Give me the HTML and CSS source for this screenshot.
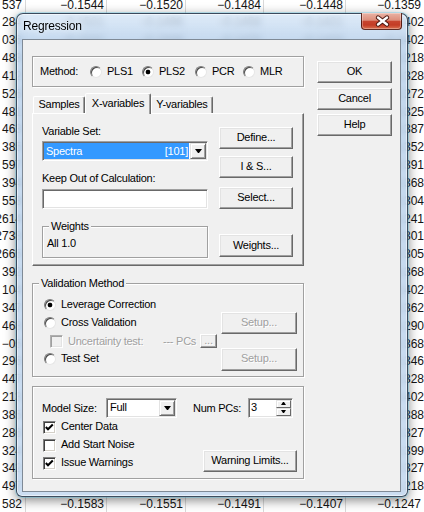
FILE: index.html
```html
<!DOCTYPE html>
<html>
<head>
<meta charset="utf-8">
<link rel="stylesheet" href="styles.css">
</head>
<body>
<div class="sheet">
  <div class="r ed"><span>537</span><span>−0.1544</span><span>−0.1520</span><span>−0.1484</span><span>−0.1448</span><span>−0.1359</span></div>
  <div class="r"><span>284</span><span>−0.1521</span><span>−0.1496</span><span>−0.1458</span><span>−0.1421</span><span>−0.1402</span></div>
  <div class="r"><span>036</span><span>−0.1532</span><span>−0.1508</span><span>−0.1470</span><span>−0.1433</span><span>−0.1402</span></div>
  <div class="r"><span>483</span><span></span><span></span><span></span><span></span><span>−0.1218</span></div>
  <div class="r"><span>412</span><span></span><span></span><span></span><span></span><span>−0.1328</span></div>
  <div class="r"><span>526</span><span></span><span></span><span></span><span></span><span>−0.1272</span></div>
  <div class="r"><span>481</span><span></span><span></span><span></span><span></span><span>−0.1325</span></div>
  <div class="r"><span>463</span><span></span><span></span><span></span><span></span><span>−0.1387</span></div>
  <div class="r"><span>385</span><span></span><span></span><span></span><span></span><span>−0.1352</span></div>
  <div class="r"><span>597</span><span></span><span></span><span></span><span></span><span>−0.1391</span></div>
  <div class="r"><span>394</span><span></span><span></span><span></span><span></span><span>−0.1368</span></div>
  <div class="r"><span>558</span><span></span><span></span><span></span><span></span><span>−0.1304</span></div>
  <div class="r"><span class="rtl">2614</span><span></span><span></span><span></span><span></span><span>−0.1241</span></div>
  <div class="r"><span class="rtl">2738</span><span></span><span></span><span></span><span></span><span>−0.1301</span></div>
  <div class="r"><span class="rtl">2665</span><span></span><span></span><span></span><span></span><span>−0.1305</span></div>
  <div class="r"><span>392</span><span></span><span></span><span></span><span></span><span>−0.1368</span></div>
  <div class="r"><span>104</span><span></span><span></span><span></span><span></span><span>−0.1402</span></div>
  <div class="r"><span>347</span><span></span><span></span><span></span><span></span><span>−0.1362</span></div>
  <div class="r"><span>468</span><span></span><span></span><span></span><span></span><span>−0.1290</span></div>
  <div class="r"><span>−05</span><span></span><span></span><span></span><span></span><span>−0.1368</span></div>
  <div class="r"><span>296</span><span></span><span></span><span></span><span></span><span>−0.1346</span></div>
  <div class="r"><span>447</span><span></span><span></span><span></span><span></span><span>−0.1328</span></div>
  <div class="r"><span>213</span><span></span><span></span><span></span><span></span><span>−0.1402</span></div>
  <div class="r"><span>385</span><span></span><span></span><span></span><span></span><span>−0.1388</span></div>
  <div class="r"><span>286</span><span></span><span></span><span></span><span></span><span>−0.1327</span></div>
  <div class="r"><span>324</span><span></span><span></span><span></span><span></span><span>−0.1399</span></div>
  <div class="r"><span>342</span><span></span><span></span><span></span><span></span><span>−0.1327</span></div>
  <div class="r"><span>497</span><span>−0.1569</span><span>−0.1540</span><span>−0.1484</span><span>−0.1403</span><span>−0.1218</span></div>
  <div class="r ed"><span>582</span><span>−0.1583</span><span>−0.1551</span><span>−0.1491</span><span>−0.1407</span><span>−0.1247</span></div>
</div>

<div class="window">
  <div class="titlebar">
    <span class="title">Regression</span>
    <span class="close">
      <svg width="41" height="16" viewBox="0 0 41 16">
        <path d="M16 4.5 L25 11.5 M25 4.5 L16 11.5" stroke="#4b1810" stroke-width="4.4" stroke-linecap="round" fill="none"/>
        <path d="M16 4.5 L25 11.5 M25 4.5 L16 11.5" stroke="#ffffff" stroke-width="2.4" stroke-linecap="round" fill="none"/>
      </svg>
    </span>
  </div>
  <div class="client">
    <div class="lc">
      <div class="grp method">
        <span class="mlabel">Method:</span>
        <span class="opt w52"><i class="rd"></i>PLS1</span>
        <span class="opt w53"><i class="rd on"></i>PLS2</span>
        <span class="opt w48"><i class="rd"></i>PCR</span>
        <span class="opt"><i class="rd"></i>MLR</span>
      </div>
      <div class="tabs">
        <span class="tab t1">Samples</span>
        <span class="tab t2 on">X-variables</span>
        <span class="tab t3">Y-variables</span>
      </div>
      <div class="panel">
        <div class="pleft">
          <div class="l1">Variable Set:</div>
          <div class="cb big">
            <span class="sel"><span>Spectra</span><span>[101]</span></span>
            <span class="dd"></span>
          </div>
          <div class="l2">Keep Out of Calculation:</div>
          <div class="fld"></div>
          <div class="grp wg">
            <span class="cap">Weights</span>
            <div class="gtext">All 1.0</div>
          </div>
        </div>
        <div class="pright">
          <div class="btn">Define...</div>
          <div class="btn m7">I &amp; S...</div>
          <div class="btn m9">Select...</div>
          <div class="btn m25">Weights...</div>
        </div>
      </div>
      <div class="grp valid">
        <span class="cap">Validation Method</span>
        <div class="vrow first"><i class="rd on"></i>Leverage Correction</div>
        <div class="vrow"><i class="rd"></i>Cross Validation<div class="btn setup dis">Setup...</div></div>
        <div class="vrow u"><i class="ck off"></i><span class="dis ut">Uncertainty test:</span><span class="dis pcs">--- PCs</span><div class="btn mini dis">...</div></div>
        <div class="vrow"><i class="rd"></i>Test Set<div class="btn setup s2 dis">Setup...</div></div>
      </div>
      <div class="grp opts">
        <div class="mrow">
          <span class="msl">Model Size:</span>
          <div class="cb sm"><span class="val">Full</span><span class="dd"></span></div>
          <span class="npc">Num PCs:</span>
          <div class="spin"><span class="val">3</span><span class="sb"><i class="up"></i><i class="dn"></i></span></div>
        </div>
        <div class="crow"><i class="ck"><svg width="11" height="11" viewBox="0 0 11 11"><path d="M1.8 5 L4 7.3 L8.8 2.5" stroke="#000" stroke-width="2" fill="none"/></svg></i>Center Data</div>
        <div class="crow"><i class="ck"></i>Add Start Noise</div>
        <div class="crow"><i class="ck"><svg width="11" height="11" viewBox="0 0 11 11"><path d="M1.8 5 L4 7.3 L8.8 2.5" stroke="#000" stroke-width="2" fill="none"/></svg></i>Issue Warnings<div class="btn wl">Warning Limits...</div></div>
      </div>
    </div>
    <div class="rc">
      <div class="btn">OK</div>
      <div class="btn">Cancel</div>
      <div class="btn">Help</div>
    </div>
  </div>
</div>
</body>
</html>
```

FILE: styles.css
```css
* { box-sizing: border-box; }
html, body { margin: 0; padding: 0; }
body {
  width: 424px; height: 512px; overflow: hidden; position: relative;
  background: #fff; color: #000;
  font-family: "Liberation Sans", Arial, sans-serif;
}

/* spreadsheet behind */
.sheet { margin-top: -3.5px; }
.r {
  display: grid;
  grid-template-columns: 26px 81px 79px 78px 82px 78px;
  height: 17.857px; line-height: 17.857px;
  font-size: 12px; color: #141414;
}
.r span { text-align: right; padding-right: 2px; border-right: 1px solid #d9d9d9; white-space: nowrap; }
.r span:first-child { padding-right: 3px; }
.r span:last-child { border-right: 0; padding-right: 0; }
.r.ed span:last-child { padding-right: 3px; }
.r span.rtl { direction: rtl; }

/* window */
.window {
  position: absolute; left: 16px; top: 13px;
  width: 392px; height: 484px;
  display: flex; flex-direction: column;
  padding: 0 6px 4px 5px;
  border: 1px solid rgba(22, 38, 56, .8);
  border-radius: 7px 7px 6px 6px;
  background: linear-gradient(180deg, rgba(214, 230, 247, .8), rgba(186, 210, 236, .84) 26px, rgba(196, 217, 240, .86));
  -webkit-backdrop-filter: blur(3px);
  backdrop-filter: blur(3px);
  box-shadow: inset 0 0 0 1px rgba(255, 255, 255, .55), 0 0 0 1px rgba(90, 200, 235, .35), 0 3px 12px rgba(0, 0, 0, .5);
}
.titlebar { height: 25px; flex: none; display: flex; align-items: flex-start; }
.title {
  margin-top: 5px; padding-left: 1px;
  font-size: 12px; line-height: 14px; letter-spacing: -.2px; color: #000;
  text-shadow: 0 0 6px rgba(255, 255, 255, .9);
}
.close {
  margin-left: auto; margin-top: -1px; margin-right: -1px;
  width: 41px; height: 17px;
  border: 1px solid rgba(70, 20, 14, .85); border-top: 0;
  border-radius: 0 0 4px 4px;
  background: linear-gradient(180deg, #e9b3a5 0%, #dd8e7b 45%, #c7452f 52%, #c33c25 75%, #d9704f 100%);
  box-shadow: inset 0 0 0 1px rgba(255, 255, 255, .3);
}
.close svg { display: block; }

.client {
  flex: 1; display: flex; align-items: flex-start;
  padding: 16px 0 0 9px;
  background: #f0f0f0;
  border: 1px solid #7f8a96;
  font-size: 11px; line-height: 13px; letter-spacing: -.25px;
}
.lc { width: 272px; flex: none; }
.rc { width: 75px; flex: none; margin: 5px 0 0 13px; display: flex; flex-direction: column; gap: 4.5px; }

/* buttons */
.btn {
  display: flex; align-items: center; justify-content: center;
  height: 22px; flex: none;
  background: #f0f0f0;
  border: 1px solid; border-color: #fff #696969 #696969 #fff;
  box-shadow: inset -1px -1px 0 #a0a0a0, inset 1px 1px 0 #e3e3e3;
}
.dis { color: #a0a0a0; text-shadow: 1px 1px 0 #fff; }

/* etched group */
.grp { border: 1px solid #a0a0a0; box-shadow: inset 1px 1px 0 #fff, 1px 1px 0 #fff; }
.cap { display: block; width: max-content; margin-top: -7px; padding: 0 2px; background: #f0f0f0; }

.method { height: 31px; display: flex; align-items: center; padding-left: 7px; }
.mlabel { width: 50px; flex: none; }
.opt { display: flex; align-items: center; flex: none; }
.w52 { width: 52px; }
.w53 { width: 53px; }
.w48 { width: 48px; }

/* radio */
.rd {
  width: 12px; height: 12px; flex: none; margin-right: 5px;
  border-radius: 50%;
  background: #fff;
  border: 1px solid; border-color: #7c7c7c #e6e6e6 #e6e6e6 #7c7c7c;
  box-shadow: inset 1px 1px 0 #4a4a4a;
}
.rd.on { background: radial-gradient(circle, #000 0, #000 2px, #fff 2.7px); }

/* checkbox */
.ck {
  width: 13px; height: 13px; flex: none; margin-right: 5px;
  background: #fff;
  border: 1px solid; border-color: #808080 #fff #fff #808080;
  box-shadow: inset 1px 1px 0 #404040, inset -1px -1px 0 #d4d0c8;
}
.ck svg { display: block; }
.ck.off { background: #f0f0f0; border-color: #b0b0b0 #fff #fff #b0b0b0; box-shadow: inset 1px 1px 0 #a0a0a0, inset -1px -1px 0 #e3e3e3; }

/* tabs */
.tabs { display: flex; align-items: flex-end; height: 20px; margin-top: 6px; padding-left: 1px; }
.tab {
  height: 17px; flex: none; text-align: center; line-height: 15px;
  border: 1px solid; border-bottom: 0;
  border-color: #fff #696969 transparent #fff;
  box-shadow: inset -1px 0 0 #a0a0a0;
  border-radius: 2px 2px 0 0;
}
.t1 { width: 52px; }
.t2 { width: 66px; }
.t3 { width: 62px; }
.tab.on { height: 21px; margin-bottom: -1px; padding-top: 2px; background: #f0f0f0; position: relative; z-index: 1; }

.panel {
  height: 153px; display: flex; padding-left: 9px;
  border: 1px solid; border-color: #fff #696969 #696969 #fff;
  box-shadow: inset -1px -1px 0 #a0a0a0;
}
.pleft { width: 166px; flex: none; }
.pright { width: 74px; flex: none; margin-left: 11px; padding-top: 13px; display: flex; flex-direction: column; }
.pright .m7 { margin-top: 7px; }
.pright .m9 { margin-top: 9px; }
.pright .m25 { margin-top: 25px; height: 23px; }
.l1 { margin-top: 11px; }
.l2 { margin-top: 11px; }

/* sunken combo / field */
.cb, .fld, .spin {
  display: flex; height: 20px; padding: 1px;
  background: #fff;
  border: 1px solid; border-color: #a0a0a0 #fff #fff #a0a0a0;
  box-shadow: inset 1px 1px 0 #696969, inset -1px -1px 0 #e3e3e3;
}
.cb.big { margin-top: 3px; }
.fld { margin-top: 4px; }
.sel {
  flex: 1; display: flex; justify-content: space-between; align-items: center;
  background: #3399ff; color: #fff;
  padding: 0 1px 0 2px; margin-right: 1px;
}
.dd {
  width: 16px; flex: none;
  display: flex; align-items: center; justify-content: center;
  background: #f0f0f0;
  border: 1px solid; border-color: #e3e3e3 #696969 #696969 #e3e3e3;
  box-shadow: inset 1px 1px 0 #fff, inset -1px -1px 0 #a0a0a0;
}
.dd::after {
  content: ""; width: 1px; height: 0;
  border-left: 3px solid transparent; border-right: 3px solid transparent;
  border-top: 4px solid #000;
}

.wg { height: 32px; margin-top: 17px; padding-left: 4px; }
.wg .cap { margin-left: 2px; }
.gtext { margin-top: 4px; }

/* validation */
.valid { height: 94px; margin-top: 17px; padding: 0 6px 0 11px; }
.valid .cap { margin-left: -5px; }
.vrow { display: flex; align-items: center; height: 18px; }
.vrow.first { margin-top: 6px; }
.setup { width: 76px; margin-left: auto; }
.setup.s2 { height: 23px; }
.vrow.u .ck { margin-left: 6px; }
.ut { width: 95px; flex: none; }
.pcs { width: 37px; flex: none; }
.mini { width: 17px; height: 14px; line-height: 10px; align-items: flex-end; padding-bottom: 2px; }

/* options */
.opts { height: 93px; margin-top: 9px; padding: 11px 6px 0 9px; }
.mrow { display: flex; align-items: center; height: 20px; }
.msl { width: 64px; flex: none; }
.cb.sm { width: 71px; flex: none; }
.val { flex: 1; display: flex; align-items: center; padding-left: 2px; }
.npc { width: 55px; flex: none; margin-left: 16px; }
.spin { width: 45px; flex: none; }
.spin .val { padding-left: 1px; }
.sb { width: 15px; flex: none; display: flex; flex-direction: column; }
.sb i {
  flex: 1; display: flex; align-items: center; justify-content: center;
  background: #f0f0f0;
  border: 1px solid; border-color: #e3e3e3 #696969 #696969 #e3e3e3;
  box-shadow: inset 1px 1px 0 #fff;
}
.sb i::after { content: ""; width: 1px; height: 0; border-left: 2px solid transparent; border-right: 2px solid transparent; }
.sb .up::after { border-bottom: 3px solid #000; }
.sb .dn::after { border-top: 3px solid #000; }
.crow { display: flex; align-items: center; height: 18px; padding-left: 1px; }
.wl { width: 94px; margin-left: auto; align-self: flex-end; }
```
